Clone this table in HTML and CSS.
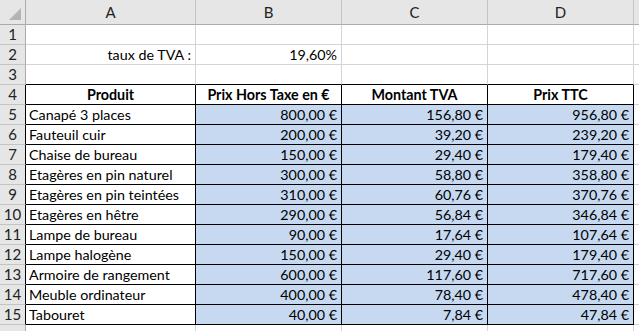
FILE: index.html
```html
<!DOCTYPE html>
<html lang="fr">
<head>
<meta charset="utf-8">
<title>TVA</title>
<link rel="stylesheet" href="styles.css">
</head>
<body>
<div class="sheet">
  <div class="c hd corner"><span class="tri"></span></div>
  <div class="c hd">A</div>
  <div class="c hd">B</div>
  <div class="c hd">C</div>
  <div class="c hd">D</div>
  <div class="c hd last"></div>

  <div class="c rn">1</div><div class="c"></div><div class="c"></div><div class="c"></div><div class="c"></div><div class="c last"></div>
  <div class="c rn">2</div><div class="c r">taux de TVA :</div><div class="c r">19,60%</div><div class="c"></div><div class="c"></div><div class="c last"></div>
  <div class="c rn">3</div><div class="c tb"></div><div class="c tb"></div><div class="c tb"></div><div class="c tb"></div><div class="c last"></div>

  <div class="c rn tl">4</div><div class="c t ctr bold">Produit</div><div class="c t ctr bold">Prix Hors Taxe en €</div><div class="c t ctr bold">Montant TVA</div><div class="c t ctr bold">Prix TTC</div><div class="c last"></div>

  <div class="c rn tl">5</div><div class="c t">Canapé 3 places</div><div class="c t b r">800,00 €</div><div class="c t b r">156,80 €</div><div class="c t b r">956,80 €</div><div class="c last"></div>
  <div class="c rn tl">6</div><div class="c t">Fauteuil cuir</div><div class="c t b r">200,00 €</div><div class="c t b r">39,20 €</div><div class="c t b r">239,20 €</div><div class="c last"></div>
  <div class="c rn tl">7</div><div class="c t">Chaise de bureau</div><div class="c t b r">150,00 €</div><div class="c t b r">29,40 €</div><div class="c t b r">179,40 €</div><div class="c last"></div>
  <div class="c rn tl">8</div><div class="c t">Etagères en pin naturel</div><div class="c t b r">300,00 €</div><div class="c t b r">58,80 €</div><div class="c t b r">358,80 €</div><div class="c last"></div>
  <div class="c rn tl">9</div><div class="c t">Etagères en pin teintées</div><div class="c t b r">310,00 €</div><div class="c t b r">60,76 €</div><div class="c t b r">370,76 €</div><div class="c last"></div>
  <div class="c rn tl">10</div><div class="c t">Etagères en hêtre</div><div class="c t b r">290,00 €</div><div class="c t b r">56,84 €</div><div class="c t b r">346,84 €</div><div class="c last"></div>
  <div class="c rn tl">11</div><div class="c t">Lampe de bureau</div><div class="c t b r">90,00 €</div><div class="c t b r">17,64 €</div><div class="c t b r">107,64 €</div><div class="c last"></div>
  <div class="c rn tl">12</div><div class="c t">Lampe halogène</div><div class="c t b r">150,00 €</div><div class="c t b r">29,40 €</div><div class="c t b r">179,40 €</div><div class="c last"></div>
  <div class="c rn tl">13</div><div class="c t">Armoire de rangement</div><div class="c t b r">600,00 €</div><div class="c t b r">117,60 €</div><div class="c t b r">717,60 €</div><div class="c last"></div>
  <div class="c rn tl">14</div><div class="c t">Meuble ordinateur</div><div class="c t b r">400,00 €</div><div class="c t b r">78,40 €</div><div class="c t b r">478,40 €</div><div class="c last"></div>
  <div class="c rn tl">15</div><div class="c t">Tabouret</div><div class="c t b r">40,00 €</div><div class="c t b r">7,84 €</div><div class="c t b r">47,84 €</div><div class="c last"></div>

  <div class="c rn"></div><div class="c"></div><div class="c"></div><div class="c"></div><div class="c"></div><div class="c last"></div>
</div>
</body>
</html>
```

FILE: styles.css
```css
html, body {
  margin: 0;
  padding: 0;
  background: #ffffff;
  overflow: hidden;
}

.sheet {
  display: grid;
  grid-template-columns: 26px 170px 146px 146px 146px 1fr;
  grid-template-rows: 25px;
  grid-auto-rows: 20px;
  font-family: "Lato", "Liberation Sans", sans-serif;
  font-size: 14.3px;
  color: #000;
  width: 639px;
}

.c {
  box-sizing: border-box;
  border-right: 1px solid #d4d4d4;
  border-bottom: 1px solid #d4d4d4;
  padding: 0 3px;
  line-height: 19px;
  white-space: nowrap;
  overflow: hidden;
  display: flex;
  align-items: flex-end;
}

.hd {
  background: #e6e6e6;
  border-right-color: #c4c4c4;
  border-bottom-color: #ababab;
  justify-content: center;
  align-items: center;
  color: #222;
  font-size: 15px;
  line-height: 24px;
}

.corner {
  position: relative;
  border-right-color: #ababab;
}

.tri {
  position: absolute;
  right: 4px;
  bottom: 4px;
  width: 0;
  height: 0;
  border-left: 12px solid transparent;
  border-bottom: 12px solid #b4b4b4;
}

.rn {
  background: #e6e6e6;
  border-right-color: #ababab;
  border-bottom-color: #c4c4c4;
  justify-content: center;
  color: #222;
  font-size: 15px;
  padding: 0;
}

.tl {
  border-right-color: #000;
}

.tb {
  border-bottom-color: #000;
}

.t {
  border-right-color: #000;
  border-bottom-color: #000;
}

.b {
  background: #c6d9f0;
}

.r {
  justify-content: flex-end;
  padding-right: 4px;
}

.ctr {
  justify-content: center;
}

.bold {
  font-weight: bold;
}

.last {
  border-right: none;
}
```
